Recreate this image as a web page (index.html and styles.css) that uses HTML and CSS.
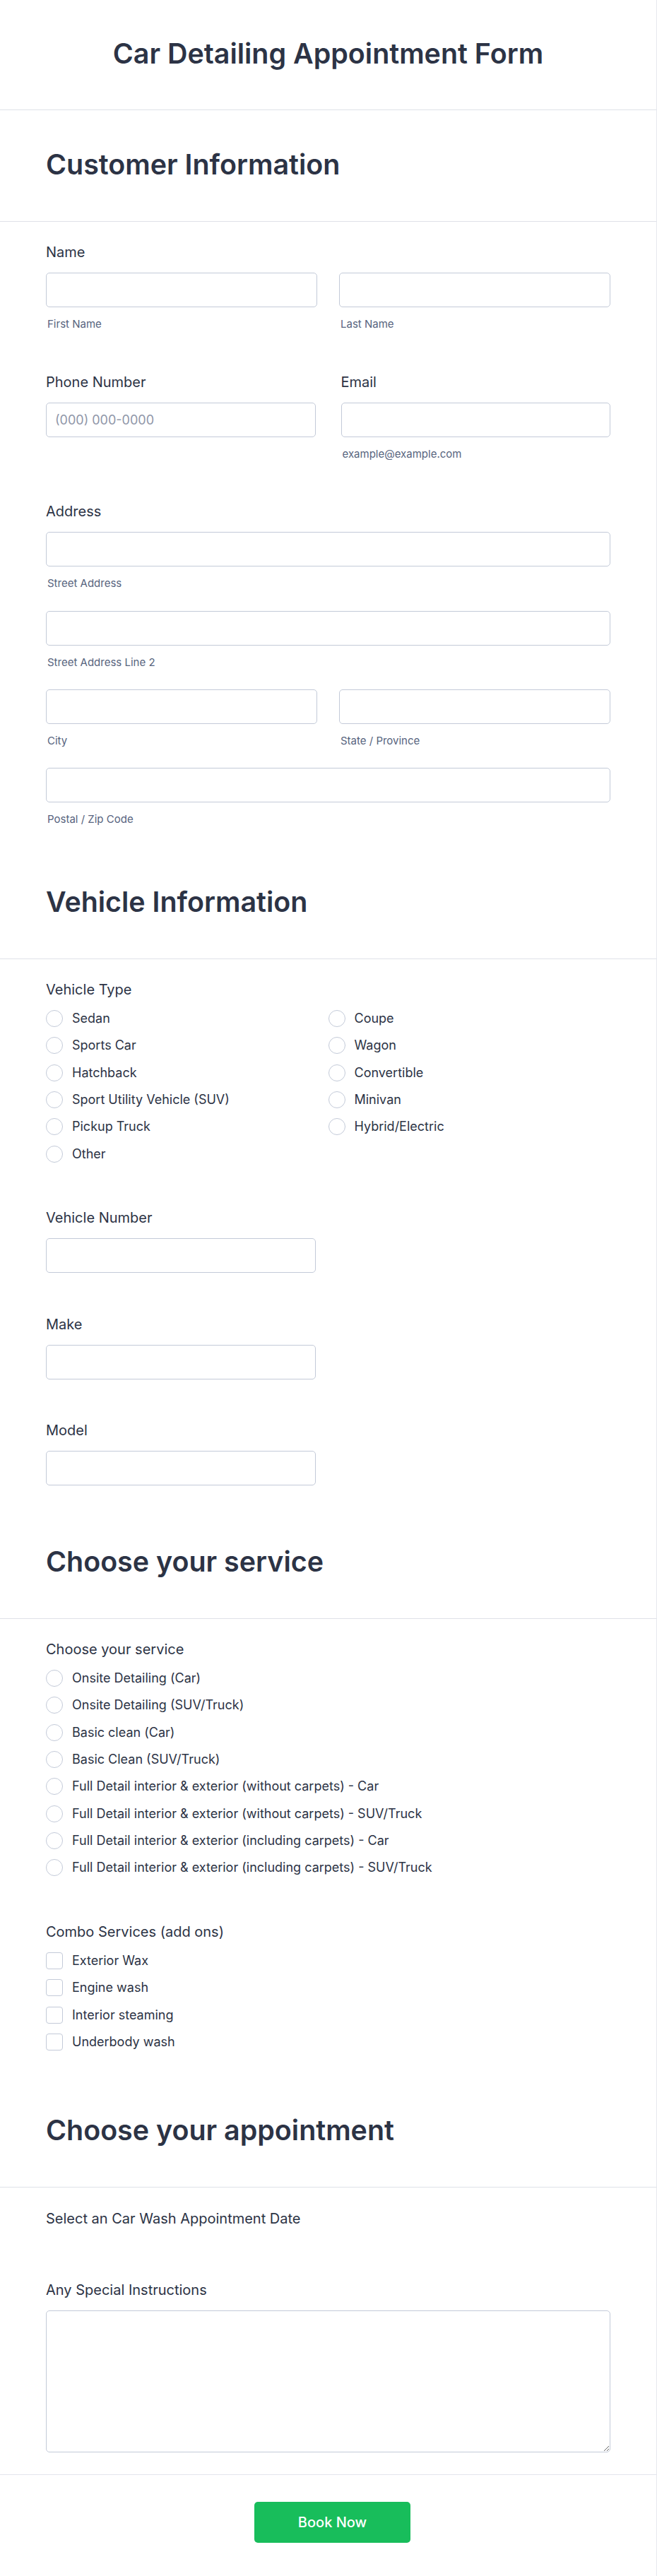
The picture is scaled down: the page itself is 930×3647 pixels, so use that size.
FILE: index.html
```html
<!DOCTYPE html>
<html lang="en">
<head>
  <meta charset="UTF-8">
  <meta name="viewport" content="width=device-width, initial-scale=1.0">
  <title>Car Detailing Appointment Form</title>
  <link rel="stylesheet" href="styles.css">
</head>
<body>

  <form class="form" onsubmit="return false;">

    <header class="form-header">
      <h1>Car Detailing Appointment Form</h1>
    </header>

    <!-- Customer Information -->
    <h2 class="section-head">Customer Information</h2>
    <div class="section-body">

      <div class="field">
        <label class="field-label">Name</label>
        <div class="cols">
          <div>
            <input type="text" class="text-input">
            <span class="sublabel">First Name</span>
          </div>
          <div>
            <input type="text" class="text-input">
            <span class="sublabel">Last Name</span>
          </div>
        </div>
      </div>

      <div class="cols cols-wide">
        <div class="field">
          <label class="field-label">Phone Number</label>
          <input type="tel" class="text-input" placeholder="(000) 000-0000">
        </div>
        <div class="field">
          <label class="field-label">Email</label>
          <input type="email" class="text-input">
          <span class="sublabel">example@example.com</span>
        </div>
      </div>

      <div class="field">
        <label class="field-label">Address</label>
        <div class="address-rows">
          <div>
            <input type="text" class="text-input">
            <span class="sublabel">Street Address</span>
          </div>
          <div>
            <input type="text" class="text-input">
            <span class="sublabel">Street Address Line 2</span>
          </div>
          <div class="cols">
            <div>
              <input type="text" class="text-input">
              <span class="sublabel">City</span>
            </div>
            <div>
              <input type="text" class="text-input">
              <span class="sublabel">State / Province</span>
            </div>
          </div>
          <div>
            <input type="text" class="text-input">
            <span class="sublabel">Postal / Zip Code</span>
          </div>
        </div>
      </div>
    </div>

    <!-- Vehicle Information -->
    <h2 class="section-head">Vehicle Information</h2>
    <div class="section-body">

      <div class="field">
        <label class="field-label">Vehicle Type</label>
        <div class="options options-2col">
          <div class="option-col">
            <label class="option"><input type="radio" name="vtype"> Sedan</label>
            <label class="option"><input type="radio" name="vtype"> Sports Car</label>
            <label class="option"><input type="radio" name="vtype"> Hatchback</label>
            <label class="option"><input type="radio" name="vtype"> Sport Utility Vehicle (SUV)</label>
            <label class="option"><input type="radio" name="vtype"> Pickup Truck</label>
            <label class="option"><input type="radio" name="vtype"> Other</label>
          </div>
          <div class="option-col">
            <label class="option"><input type="radio" name="vtype"> Coupe</label>
            <label class="option"><input type="radio" name="vtype"> Wagon</label>
            <label class="option"><input type="radio" name="vtype"> Convertible</label>
            <label class="option"><input type="radio" name="vtype"> Minivan</label>
            <label class="option"><input type="radio" name="vtype"> Hybrid/Electric</label>
          </div>
        </div>
      </div>

      <div class="field">
        <label class="field-label">Vehicle Number</label>
        <input type="text" class="text-input half">
      </div>

      <div class="field">
        <label class="field-label">Make</label>
        <input type="text" class="text-input half">
      </div>

      <div class="field">
        <label class="field-label">Model</label>
        <input type="text" class="text-input half">
      </div>
    </div>

    <!-- Choose your service -->
    <h2 class="section-head">Choose your service</h2>
    <div class="section-body">

      <div class="field">
        <label class="field-label">Choose your service</label>
        <div class="options option-col">
          <label class="option"><input type="radio" name="service"> Onsite Detailing (Car)</label>
          <label class="option"><input type="radio" name="service"> Onsite Detailing (SUV/Truck)</label>
          <label class="option"><input type="radio" name="service"> Basic clean (Car)</label>
          <label class="option"><input type="radio" name="service"> Basic Clean (SUV/Truck)</label>
          <label class="option"><input type="radio" name="service"> Full Detail interior &amp; exterior (without carpets) - Car</label>
          <label class="option"><input type="radio" name="service"> Full Detail interior &amp; exterior (without carpets) - SUV/Truck</label>
          <label class="option"><input type="radio" name="service"> Full Detail interior &amp; exterior (including carpets) - Car</label>
          <label class="option"><input type="radio" name="service"> Full Detail interior &amp; exterior (including carpets) - SUV/Truck</label>
        </div>
      </div>

      <div class="field">
        <label class="field-label">Combo Services (add ons)</label>
        <div class="options option-col">
          <label class="option"><input type="checkbox"> Exterior Wax</label>
          <label class="option"><input type="checkbox"> Engine wash</label>
          <label class="option"><input type="checkbox"> Interior steaming</label>
          <label class="option"><input type="checkbox"> Underbody wash</label>
        </div>
      </div>
    </div>

    <!-- Choose your appointment -->
    <h2 class="section-head">Choose your appointment</h2>
    <div class="section-body">

      <div class="field">
        <label class="field-label">Select an Car Wash Appointment Date</label>
      </div>

      <div class="field">
        <label class="field-label">Any Special Instructions</label>
        <textarea class="text-area"></textarea>
      </div>
    </div>

    <footer class="form-footer">
      <button type="submit" class="submit-btn">Book Now</button>
    </footer>

  </form>

</body>
</html>
```

FILE: styles.css
```css
body {
  margin: 0;
  padding: 0;
  background-color: #fff;
  font-family: Inter, "Noto Sans", Arial, sans-serif;
  color: #2c3345;
}

.form {
  width: 930px;
  box-sizing: border-box;
  border-right: 1px solid #e6e8ee;
}

.form-header {
  padding: 54px 65px 56px;
  border-bottom: 1px solid #dfe1e8;
  text-align: center;
}

.form-header h1 {
  margin: 0;
  font-size: 39.4px;
  line-height: 45px;
  font-weight: 600;
}

.section-head {
  margin: 0;
  padding: 55px 65px 57px;
  font-size: 39.4px;
  line-height: 45px;
  font-weight: 600;
  border-bottom: 1px solid #dfe1e8;
}

.section-body {
  padding: 1px 65px 0;
}

.field {
  padding: 30.3px 0;
}

.field-label {
  display: block;
  margin-bottom: 17px;
  font-size: 20px;
  line-height: 24px;
  font-weight: 400;
}

.cols {
  display: grid;
  grid-template-columns: 1fr 1fr;
  column-gap: 31px;
}

.cols-wide {
  column-gap: 36px;
}

.text-input {
  display: block;
  width: 100%;
  height: 49px;
  box-sizing: border-box;
  padding: 0 12px;
  border: 1px solid #c3cad8;
  border-radius: 5px;
  font-family: inherit;
  font-size: 18px;
  color: #2c3345;
  background: #fff;
}

.text-input::placeholder {
  color: #8f96a8;
}

.text-input.half {
  width: 382px;
}

.sublabel {
  display: block;
  margin-top: 15px;
  padding-left: 2px;
  font-size: 15px;
  line-height: 18px;
  color: #57647e;
}

.address-rows {
  display: flex;
  flex-direction: column;
  gap: 29.3px;
}

.options {
  padding-bottom: 6px;
}

.options-2col {
  display: grid;
  grid-template-columns: 1fr 1fr;
}

.option-col {
  display: flex;
  flex-direction: column;
  gap: 14.35px;
}

.option {
  display: flex;
  align-items: center;
  gap: 13px;
  height: 24px;
  font-size: 18px;
  line-height: 24px;
  color: #2c3345;
}

.option input {
  appearance: none;
  -webkit-appearance: none;
  flex: none;
  width: 24px;
  height: 24px;
  margin: 0;
  box-sizing: border-box;
  border: 1.5px solid #c3cad8;
  background: #fff;
}

.option input[type="radio"] {
  border-radius: 50%;
}

.option input[type="checkbox"] {
  border-radius: 4px;
}

.text-area {
  display: block;
  width: 100%;
  height: 201px;
  box-sizing: border-box;
  padding: 12px;
  border: 1px solid #c3cad8;
  border-radius: 5px;
  font-family: inherit;
  font-size: 18px;
  resize: vertical;
}

.form-footer {
  border-top: 1px solid #e3e5ec;
  padding: 38px 0 50px 12px;
  text-align: center;
}

.submit-btn {
  width: 221px;
  height: 58px;
  border: none;
  border-radius: 5px;
  background-color: #18bd5b;
  color: #fff;
  font-family: inherit;
  font-size: 20px;
  font-weight: 500;
  cursor: pointer;
}
```
